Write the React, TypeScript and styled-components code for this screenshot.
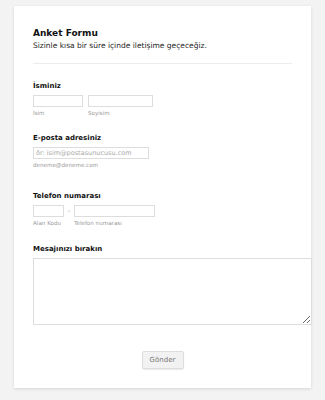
import styled, { createGlobalStyle } from "styled-components";

const GlobalStyle = createGlobalStyle`
  html, body {
    margin: 0;
    padding: 0;
    background: #f3f3f3;
    font-family: "DejaVu Sans", Verdana, sans-serif;
  }
`;

const Page = styled.div`
  padding: 6px 14px 12px 14px;
`;

const Card = styled.div`
  background: #fff;
  box-shadow: 0 1px 3px rgba(0, 0, 0, 0.12);
  padding: 22px 0 19px 19px;
`;

const Header = styled.div`
  margin-right: 19px;
  padding-bottom: 13px;
  border-bottom: 1px solid #ececec;
`;

const Title = styled.h1`
  margin: 0;
  font-size: 9px;
  line-height: 11px;
  font-weight: bold;
  color: #111;
`;

const Subtitle = styled.p`
  margin: 2px 0 0 0;
  font-size: 7.5px;
  line-height: 9px;
  color: #222;
`;

const Field = styled.div<{ $gap: number }>`
  margin-top: ${(p) => p.$gap}px;
`;

const Label = styled.div`
  font-size: 7px;
  line-height: 9px;
  font-weight: bold;
  color: #111;
  margin-bottom: 4px;
`;

const Row = styled.div<{ $gap: number }>`
  display: flex;
  align-items: flex-start;
  gap: ${(p) => p.$gap}px;
`;

const Col = styled.div`
  display: flex;
  flex-direction: column;
`;

const Input = styled.input<{ $w: number }>`
  box-sizing: border-box;
  width: ${(p) => p.$w}px;
  height: 12px;
  margin: 0;
  padding: 0 2px;
  border: 1px solid #ddd;
  font-family: inherit;
  font-size: 6.5px;
  color: #999;
  background: #fff;
  &::placeholder {
    color: #aaa;
  }
`;

const Sub = styled.span`
  font-size: 5.6px;
  line-height: 7px;
  color: #999;
  margin-top: 3px;
`;

const Dash = styled.span`
  width: 10px;
  font-size: 7px;
  line-height: 12px;
  color: #999;
  text-align: center;
`;

const TextArea = styled.textarea`
  display: block;
  box-sizing: border-box;
  width: 279px;
  height: 67px;
  margin: 0;
  border: 1px solid #ddd;
  resize: both;
  font-family: inherit;
`;

const ButtonRow = styled.div`
  display: flex;
  justify-content: center;
  margin-top: 26px;
  margin-right: 19px;
`;

const Button = styled.button`
  width: 42px;
  height: 18px;
  padding: 0;
  border: 1px solid #ddd;
  border-radius: 2px;
  background: #f2f2f2;
  box-shadow: 0 1px 1px rgba(0, 0, 0, 0.08);
  font-family: inherit;
  font-size: 7px;
  color: #777;
`;

export default function App() {
  return (
    <>
      <GlobalStyle />
      <Page>
        <Card>
          <Header>
            <Title>Anket Formu</Title>
            <Subtitle>Sizinle kısa bir süre içinde iletişime geçeceğiz.</Subtitle>
          </Header>

          <Field $gap={18}>
            <Label>İsminiz</Label>
            <Row $gap={5}>
              <Col>
                <Input $w={50} />
                <Sub>İsim</Sub>
              </Col>
              <Col>
                <Input $w={65} />
                <Sub>Soyisim</Sub>
              </Col>
            </Row>
          </Field>

          <Field $gap={17}>
            <Label>E-posta adresiniz</Label>
            <Col>
              <Input $w={116} placeholder="ör: isim@postasunucusu.com" />
              <Sub>deneme@deneme.com</Sub>
            </Col>
          </Field>

          <Field $gap={23}>
            <Label>Telefon numarası</Label>
            <Row $gap={0}>
              <Col>
                <Input $w={31} />
                <Sub>Alan Kodu</Sub>
              </Col>
              <Dash>-</Dash>
              <Col>
                <Input $w={81} />
                <Sub>Telefon numarası</Sub>
              </Col>
            </Row>
          </Field>

          <Field $gap={18}>
            <Label>Mesajınızı bırakın</Label>
            <TextArea />
          </Field>

          <ButtonRow>
            <Button>Gönder</Button>
          </ButtonRow>
        </Card>
      </Page>
    </>
  );
}
